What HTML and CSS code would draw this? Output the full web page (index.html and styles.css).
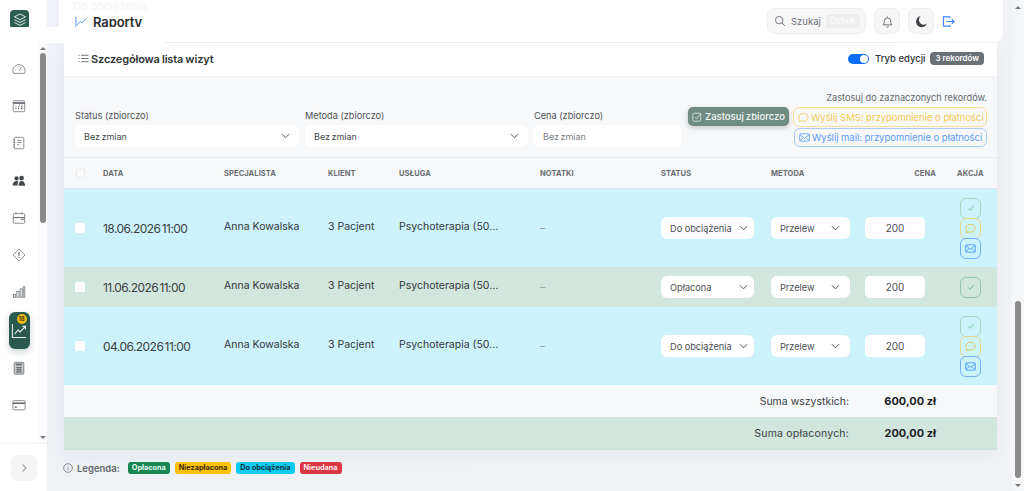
FILE: index.html
```html
<!DOCTYPE html>
<html lang="pl">
<head>
<meta charset="utf-8">
<title>Raporty</title>
<link rel="stylesheet" href="styles.css">
</head>
<body>
<div class="app">
  <aside class="sidebar">
    <div class="brand">
      <span class="brand-logo">
        <svg viewBox="0 0 20 20" width="16" height="16" fill="none" stroke="#dfe9e5" stroke-width="1.2" stroke-linejoin="round"><path d="M10 2.5 17 6l-7 3.5L3 6z"/><path d="M3 9.7l7 3.5 7-3.5"/><path d="M3 13.2l7 3.5 7-3.5"/></svg>
      </span>
    </div>
    <div class="side-body">
      <nav class="side-nav">
        <span class="nav-item"><svg viewBox="0 0 16 16" class="ico"><path d="M1.5 13h13l.5-3A7 7 0 0 0 1 10z"/><path d="M8 10l3-4"/><path d="M4 9h.6M5.5 6.3l.4.4M8 5v.6M12 9h-.6"/></svg></span>
        <span class="nav-item"><svg viewBox="0 0 16 16" class="ico"><rect x="1.5" y="2" width="13" height="12.5" rx="1"/><path d="M1.5 4.6h13" stroke-width="2"/><path d="M4 11h1M7 11h1M10 11h2M4 9h1M7 9h1M10 9h2M8 7h1M11 7h1" stroke-width="1.2"/></svg></span>
        <span class="nav-item"><svg viewBox="0 0 16 16" class="ico"><rect x="2.5" y="1.5" width="11" height="13" rx="1.4"/><path d="M1.5 4h2M1.5 7h2M1.5 10h2M1.5 13h2M6 5h5M6 7.5h5M6 10h2.5"/></svg></span>
        <span class="nav-item"><svg viewBox="0 0 16 16" class="ico-fill"><circle cx="5.2" cy="5" r="2.4"/><circle cx="11" cy="4.6" r="2.7"/><path d="M.8 13c0-3 1.8-5 4.4-5 1 0 1.7.3 2.2.7C6.6 10 6.3 11.5 6.3 13zM7.5 13.5c0-3.2 1.4-5.5 3.6-5.5s3.9 2.3 3.9 5.5z"/></svg></span>
        <span class="nav-item"><svg viewBox="0 0 16 16" class="ico"><rect x="1.5" y="3" width="13" height="11" rx="1.2"/><path d="M1.5 7.5h13M4.5 1.5V3M11.5 1.5V3M10 9.5h4.5" stroke-width="1.2"/></svg></span>
        <span class="nav-item"><svg viewBox="0 0 16 16" class="ico"><path d="M8 1.2 14.8 8 8 14.8 1.2 8z"/><path d="M8 4.8v4M8 10.4v1" stroke-width="1.4"/></svg></span>
        <span class="nav-item"><svg viewBox="0 0 16 16" class="ico"><rect x="1.5" y="10.5" width="2.5" height="3.5"/><rect x="5.5" y="7.5" width="2.5" height="6.5"/><rect x="9.3" y="4.5" width="2.3" height="9.5"/><rect x="12.8" y="2" width="1.8" height="12"/></svg></span>
        <span class="nav-item is-active">
          <svg viewBox="0 0 18 18" width="17" height="17" fill="none" stroke="#eef4f2" stroke-width="1.1"><path d="M1.5 2v14.5H16"/><path d="M4 12.5 7.5 8.5l2 2L15 5"/><path d="M12 4.5h3.3v3.3"/></svg>
          <span class="nav-badge">18</span>
        </span>
        <span class="nav-item"><svg viewBox="0 0 16 16" class="ico"><rect x="2.5" y="1.5" width="11" height="13.5" rx="1" fill="#c9cbcd"/><path d="M4.5 4h7" stroke-width="2"/><path d="M4.5 7.5h7M4.5 10h7M4.5 12.5h7M6.7 6.5v7M9.2 6.5v7" stroke-width="1"/></svg></span>
        <span class="nav-item"><svg viewBox="0 0 16 16" class="ico"><rect x="1" y="3" width="14" height="10.5" rx="1.2"/><path d="M1 6h14" stroke-width="1.8"/><path d="M3 10.5h2.5" stroke-width="1.5"/></svg></span>
      </nav>
      <div class="side-scroll">
        <span class="arrow-up"></span>
        <span class="side-thumb"></span>
        <span class="side-track"></span>
        <span class="arrow-down"></span>
      </div>
    </div>
    <div class="side-foot">
      <button class="collapse" type="button"><svg viewBox="0 0 10 10" width="10" height="10" fill="none" stroke="#9a9da1" stroke-width="1.1"><path d="M3.5 1.5 7 5 3.5 8.5"/></svg></button>
    </div>
  </aside>

  <main class="main">
    <header class="topbar">
      <span class="ghost">Do obciążenia</span>
      <div class="top-title">
        <svg viewBox="0 0 14 14" width="13" height="13" fill="none" stroke="#3b82f6" stroke-width=".9"><path d="M1 1v12h12"/><path d="M2.5 9.500 5.500 6l2 1.500L12 2.500"/></svg>
        <h1>Raporty</h1>
      </div>
      <div class="top-tools">
        <div class="search">
          <svg viewBox="0 0 14 14" width="12" height="12" fill="none" stroke="#6b7075" stroke-width="1.1"><circle cx="6" cy="6" r="4.3"/><path d="m9.2 9.2 3.6 3.6"/></svg>
          <span>Szukaj</span><kbd>Ctrl+K</kbd>
        </div>
        <button class="tool" type="button"><svg viewBox="0 0 14 14" width="13" height="13" fill="none" stroke="#565a5f" stroke-width=".9"><path d="M2.2 10.600c.9-1 1.300-2 1.300-4a3.500 3.500 0 0 1 7 0c0 2 .4 3 1.300 4z"/><path d="M5.800 12.300a1.300 1.300 0 0 0 2.400 0M7 1.500v1.500"/></svg></button>
        <button class="tool" type="button"><svg viewBox="0 0 14 14" width="13" height="13" fill="#3c4045"><path d="M6.100 1.200a6 6 0 1 0 6.700 8 5 5 0 0 1-6.700-8z"/></svg></button>
        <svg class="logout" viewBox="0 0 14 14" width="13" height="13" fill="none" stroke="#3b82f6" stroke-width="1.2"><path d="M8.500 3.500V2H1.500v10h7v-1.500"/><path d="M4.500 7H13M10.500 4.500 13 7l-2.500 2.500"/></svg>
      </div>
    </header>

    <section class="card">
      <div class="card-head">
        <h2><svg viewBox="0 0 12 12" width="11" height="11" fill="none" stroke="#55595e" stroke-width=".9"><path d="M3.500 2.500H11.500M3.500 6H11.500M3.500 9.500H11.500M.5 2.500h1.200M.5 6h1.200M.5 9.500h1.200"/></svg>Szczegółowa lista wizyt</h2>
        <div class="head-right">
          <span class="toggle"><span class="knob"></span></span>
          <span class="toggle-label">Tryb edycji</span>
          <span class="count">3 rekordów</span>
        </div>
      </div>

      <div class="bulk">
        <div class="bulk-field f-status"><label>Status (zbiorczo)</label><div class="control">Bez zmian<svg class="chev" viewBox="0 0 10 6"><path d="M1 1l4 4 4-4"/></svg></div></div>
        <div class="bulk-field f-method"><label>Metoda (zbiorczo)</label><div class="control">Bez zmian<svg class="chev" viewBox="0 0 10 6"><path d="M1 1l4 4 4-4"/></svg></div></div>
        <div class="bulk-field f-price"><label>Cena (zbiorczo)</label><div class="control muted">Bez zmian</div></div>
        <button class="apply" type="button"><svg viewBox="0 0 12 12" width="10" height="10" fill="none" stroke="#eaf0ee" stroke-width=".9"><rect x="1" y="1.500" width="9.500" height="9.500" rx="1.500"/><path d="M3.500 6l2 2 5-6"/></svg>Zastosuj zbiorczo</button>
        <div class="bulk-side">
          <p>Zastosuj do zaznaczonych rekordów.</p>
          <button class="outline amber" type="button"><svg viewBox="0 0 12 12" width="11" height="11" fill="none" stroke="currentColor" stroke-width=".9"><path d="M6 1.500c3 0 5 1.800 5 4.300s-2 4.200-5 4.200c-.8 0-1.500-.1-2.200-.4L1.500 10.500l.6-2A4 4 0 0 1 1 5.800C1 3.300 3 1.500 6 1.500z"/><path d="M3.800 5.800h.4M5.800 5.800h.4M7.800 5.800h.4"/></svg>Wyślij SMS: przypomnienie o płatności</button>
          <button class="outline blue" type="button"><svg viewBox="0 0 12 12" width="11" height="11" fill="none" stroke="currentColor" stroke-width=".9"><rect x=".8" y="2" width="10.400" height="8" rx="1.200"/><path d="m1 3 5 3.800L11 3M1 9.500l3.500-3.500M11 9.500 7.500 6"/></svg>Wyślij mail: przypomnienie o płatności</button>
        </div>
      </div>

      <div class="row thead">
        <span class="c-check"><span class="box small"></span></span>
        <span>DATA</span><span>SPECJALISTA</span><span>KLIENT</span><span>USŁUGA</span><span>NOTATKI</span><span>STATUS</span><span>METODA</span>
        <span class="c-price-h">CENA</span><span class="c-act-h">AKCJA</span>
      </div>

      <div class="row tall due">
        <span class="c-check"><span class="box"></span></span>
        <span class="c-date">18.06.2026 11:00</span><span class="up">Anna Kowalska</span><span class="up">3 Pacjent</span><span class="up">Psychoterapia (50…</span><span class="dash">–</span>
        <div class="pick p-status">Do obciążenia<svg class="chev" viewBox="0 0 10 6"><path d="M1 1l4 4 4-4"/></svg></div>
        <div class="pick p-method">Przelew<svg class="chev" viewBox="0 0 10 6"><path d="M1 1l4 4 4-4"/></svg></div>
        <div class="price">200</div>
        <div class="acts">
          <span class="act a-green"><svg viewBox="0 0 10 10" width="8" height="8" fill="none" stroke="currentColor" stroke-width="1"><path d="M1.500 5.500 4 8l4.500-6"/></svg></span>
          <span class="act a-amber"><svg viewBox="0 0 12 12" width="11" height="11" fill="none" stroke="currentColor" stroke-width=".9"><path d="M6 1.500c3 0 5 1.800 5 4.300s-2 4.200-5 4.200c-.8 0-1.500-.1-2.200-.4L1.500 10.500l.6-2A4 4 0 0 1 1 5.800C1 3.300 3 1.500 6 1.500z"/><path d="M3.800 5.800h.4M5.800 5.800h.4M7.800 5.800h.4"/></svg></span>
          <span class="act a-blue"><svg viewBox="0 0 12 12" width="11" height="11" fill="none" stroke="currentColor" stroke-width=".9"><rect x=".8" y="2" width="10.400" height="8" rx="1.200"/><path d="m1 3 5 3.800L11 3M1 9.500l3.500-3.500M11 9.500 7.500 6"/></svg></span>
        </div>
      </div>

      <div class="row short paid">
        <span class="c-check"><span class="box"></span></span>
        <span class="c-date">11.06.2026 11:00</span><span class="up">Anna Kowalska</span><span class="up">3 Pacjent</span><span class="up">Psychoterapia (50…</span><span class="dash">–</span>
        <div class="pick p-status">Opłacona<svg class="chev" viewBox="0 0 10 6"><path d="M1 1l4 4 4-4"/></svg></div>
        <div class="pick p-method">Przelew<svg class="chev" viewBox="0 0 10 6"><path d="M1 1l4 4 4-4"/></svg></div>
        <div class="price">200</div>
        <div class="acts">
          <span class="act a-green strong"><svg viewBox="0 0 10 10" width="8" height="8" fill="none" stroke="currentColor" stroke-width="1"><path d="M1.500 5.500 4 8l4.500-6"/></svg></span>
        </div>
      </div>

      <div class="row tall due">
        <span class="c-check"><span class="box"></span></span>
        <span class="c-date">04.06.2026 11:00</span><span class="up">Anna Kowalska</span><span class="up">3 Pacjent</span><span class="up">Psychoterapia (50…</span><span class="dash">–</span>
        <div class="pick p-status">Do obciążenia<svg class="chev" viewBox="0 0 10 6"><path d="M1 1l4 4 4-4"/></svg></div>
        <div class="pick p-method">Przelew<svg class="chev" viewBox="0 0 10 6"><path d="M1 1l4 4 4-4"/></svg></div>
        <div class="price">200</div>
        <div class="acts">
          <span class="act a-green"><svg viewBox="0 0 10 10" width="8" height="8" fill="none" stroke="currentColor" stroke-width="1"><path d="M1.500 5.500 4 8l4.500-6"/></svg></span>
          <span class="act a-amber"><svg viewBox="0 0 12 12" width="11" height="11" fill="none" stroke="currentColor" stroke-width=".9"><path d="M6 1.500c3 0 5 1.800 5 4.300s-2 4.200-5 4.200c-.8 0-1.500-.1-2.200-.4L1.500 10.500l.6-2A4 4 0 0 1 1 5.800C1 3.300 3 1.500 6 1.500z"/><path d="M3.800 5.800h.4M5.800 5.800h.4M7.800 5.800h.4"/></svg></span>
          <span class="act a-blue"><svg viewBox="0 0 12 12" width="11" height="11" fill="none" stroke="currentColor" stroke-width=".9"><rect x=".8" y="2" width="10.400" height="8" rx="1.200"/><path d="m1 3 5 3.800L11 3M1 9.500l3.500-3.500M11 9.500 7.500 6"/></svg></span>
        </div>
      </div>

      <div class="sum sum-all"><span>Suma wszystkich:</span><b>600,00 zł</b></div>
      <div class="sum sum-paid"><span class="paid-label">Suma opłaconych:</span><b>200,00 zł</b></div>
    </section>

    <footer class="legend">
      <svg viewBox="0 0 12 12" width="10" height="10" fill="none" stroke="#6b7075" stroke-width=".9"><circle cx="6" cy="6" r="5.200"/><path d="M6 5.200v3.500M6 3.300v.9"/></svg>
      <span class="legend-label">Legenda:</span>
      <span class="tag t-green">Opłacona</span>
      <span class="tag t-amber">Niezapłacona</span>
      <span class="tag t-cyan">Do obciążenia</span>
      <span class="tag t-red">Nieudana</span>
    </footer>
  </main>

  <div class="page-scroll">
    <span class="arrow-up"></span>
    <span class="page-track"></span>
    <span class="page-thumb"></span>
    <span class="arrow-down"></span>
  </div>
  <div class="top-veil"></div>
</div>
</body>
</html>
```

FILE: styles.css
```css
* { box-sizing: border-box; }
html, body { margin: 0; height: 100%; overflow: hidden; }
body {
  font-family: Inter, "Noto Sans", "Liberation Sans", sans-serif;
  color: #2b2f33;
  font-size: 11px;
  background: #eef0f4;
}
h1, h2, p { margin: 0; }
button { font: inherit; cursor: default; }
svg { display: block; flex: none; }

.app { display: flex; width: 1024px; height: 491px; overflow: hidden; position: relative; }
.top-veil { position: absolute; left: 0; top: 27px; width: 165px; height: 16px; background: #fff; }

/* sidebar */
.sidebar {
  width: 47px; flex: none; background: #fff;
  display: flex; flex-direction: column;
}
.brand { height: 41px; flex: none; padding: 10px 0 0 10px; overflow: hidden; }
.brand-logo {
  width: 19px; height: 19px; border-radius: 4px; background: #2e5e52;
  display: flex; align-items: center; justify-content: center;
}
.side-body { flex: 1; display: flex; min-height: 0; background: #fbfbfd; }
.side-nav { width: 38px; display: flex; flex-direction: column; align-items: center; padding-top: 9px; background: #fff; }
.nav-item { width: 38px; height: 37.3px; flex: none; display: flex; align-items: center; justify-content: center; position: relative; }
.nav-item.is-active {
  width: 21px; height: 37px; margin-top: 1px; border-radius: 6px; background: #2a5a4f;
  box-shadow: 0 3px 7px rgba(42,90,79,.25);
}
.ico { width: 14px; height: 14px; fill: none; stroke: #65696e; stroke-width: .85; }
.ico-fill { width: 14px; height: 14px; fill: #44484d; }
.nav-badge {
  position: absolute; top: 2px; right: 3px; width: 10px; height: 10px; border-radius: 50%;
  background: #f2b90f; color: #3b3210; font-size: 5.5px; font-weight: 700; line-height: 10px; text-align: center;
}
.side-scroll { width: 9px; display: flex; flex-direction: column; align-items: center; }
.side-thumb { width: 6px; height: 170px; margin-top: 3px; background: #8a8a8a; border-radius: 3px; flex: none; }
.side-track { flex: 1; }
.arrow-up, .arrow-down { width: 0; height: 0; border-left: 3px solid transparent; border-right: 3px solid transparent; flex: none; }
.arrow-up { border-bottom: 3px solid #777; margin-top: 6px; }
.arrow-down { border-top: 3px solid #777; margin-bottom: 4px; }
.side-foot { height: 48px; flex: none; border-top: 1px solid #f1f2f4; padding: 11px 0 0 11px; background: #fff; }
.collapse {
  width: 26px; height: 26px; border: 0; border-radius: 6px; background: #f5f5f6; padding: 0;
  display: flex; align-items: center; justify-content: center;
}

/* main */
.main { width: 965px; flex: none; padding: 0 9px 0 12px; background: linear-gradient(100deg, #eef1f5, #f1f2f5); display: flex; flex-direction: column; }
.topbar {
  height: 42px; flex: none; background: #fff; border-radius: 0 0 9px 9px;
  display: flex; align-items: center; justify-content: space-between;
  padding: 0 8px 0 16px; position: relative;
}
.ghost { position: absolute; left: 14px; top: 0; font-size: 11px; line-height: 13px; color: #f3f5f6; white-space: nowrap; }
.top-title { display: flex; align-items: center; gap: 5px; align-self: flex-start; padding-top: 14px; position: relative; }
.top-title h1 { font-size: 13px; font-weight: 600; letter-spacing: -.1px; color: #2a2d31; line-height: 16px; }
.top-tools { display: flex; align-items: center; }
.search {
  width: 99px; height: 26px; border: 1px solid #efeff1; border-radius: 7px; background: #f7f7f8;
  display: flex; align-items: center; padding-left: 6px; gap: 5px; color: #6f7378; font-size: 9.5px;
}
.search kbd { font: inherit; font-size: 8.5px; background: #eeeef0; color: #fff; border-radius: 3px; padding: 2px 4px; }
.tool {
  width: 26px; height: 26px; border: 1px solid #ededef; border-radius: 7px; background: #f6f6f7; padding: 0;
  display: flex; align-items: center; justify-content: center; margin-left: 8px;
}
.logout { margin-left: 8px; margin-right: 40px; }

/* card */
.card {
  margin: 1px 6px 0 5px; background: #fff; border-radius: 0 0 2px 2px;
  box-shadow: 0 6px 18px rgba(40,50,70,.05); flex: none;
}
.card-head { height: 34px; display: flex; justify-content: space-between; align-items: center; padding: 0 13px 2px 14px; border-bottom: 1px solid #f2f3f5; }
.card-head h2 { font-size: 11px; font-weight: 600; color: #32363a; display: flex; align-items: center; gap: 2px; letter-spacing: -.15px; word-spacing: -.5px; }
.head-right { display: flex; align-items: center; }
.toggle { width: 21px; height: 10px; border-radius: 5px; background: #0d6efd; position: relative; display: block; }
.knob { position: absolute; right: 1px; top: 1px; width: 8px; height: 8px; border-radius: 50%; background: #fff; }
.toggle-label { margin-left: 6px; font-size: 9.5px; font-weight: 500; color: #2f3337; }
.count { margin-left: 5px; height: 13px; line-height: 13px; padding: 0 5px; border-radius: 4px; background: #6b7075; color: #fff; font-size: 8px; font-weight: 600; }

.bulk { height: 81px; background: #f7f8fa; border-bottom: 1px solid #e9ebee; padding: 0 10px 0 11px; display: flex; align-items: flex-end; }
.bulk-field { padding-bottom: 10px; }
.f-status { width: 230px; }
.f-method { width: 229px; }
.f-price { width: 154px; }
.bulk-field label { display: block; font-size: 9.2px; color: #4f5358; margin-bottom: 3px; line-height: 13px; }
.control {
  height: 22px; background: #fff; border-radius: 6px; margin-right: 6px; padding: 0 9px;
  display: flex; align-items: center; justify-content: space-between; font-size: 9px; color: #45494e; word-spacing: -1px;
}
.f-price .control { margin-right: 7px; }
.control.muted { color: #7a7e83; }
.chev { width: 9px; height: 6px; fill: none; stroke: #4d5156; stroke-width: 1.1; flex: none; }
.apply {
  align-self: flex-start; margin: 30px 0 0 0; height: 19px; width: 101px; border: 0; border-radius: 5px; background: #6f8c82; color: #f2f5f4;
  font-size: 9.5px; font-weight: 500; display: flex; align-items: center; justify-content: center; gap: 3px; padding: 0;
  box-shadow: 0 2px 5px rgba(50,70,60,.25); white-space: nowrap; word-spacing: -.5px;
}
.bulk-side { margin-left: 4px; align-self: flex-start; padding-top: 14px; display: flex; flex-direction: column; align-items: flex-end; }
.bulk-side p { font-size: 9.2px; color: #64686d; line-height: 13px; margin-bottom: 3px; white-space: nowrap; }
.outline {
  height: 20px; background: transparent; border: 1px solid; border-radius: 6px; padding: 0 4px;
  display: flex; align-items: center; gap: 2px; font-size: 9.5px; white-space: nowrap; letter-spacing: -.03px;
}
.amber { color: #f5c94f; border-color: #fadf99; width: 194px; margin-bottom: 1px; }
.blue { color: #5b9bf5; border-color: #a9cbfa; width: 193px; height: 19px; }

/* table */
.row {
  display: grid;
  grid-template-columns: 39px 121px 104px 71px 141px 121px 110px 94px 92px 40px;
  align-items: center;
  font-size: 10.5px; color: #33373b;
}
.row.thead { height: 31px; background: #f7f8fa; border-bottom: 1px solid #d9e5ea; font-size: 7.5px; font-weight: 700; color: #6a6e73; letter-spacing: .1px; }
.c-price-h { text-align: right; padding-right: 21px; }
.c-act-h { white-space: nowrap; }
.c-check { display: flex; justify-content: center; padding-right: 7px; }
.box { width: 10px; height: 10px; background: #fff; border-radius: 2px; display: block; }
.box.small { width: 9px; height: 9px; border: 1px solid #e9eaec; background: #fbfbfc; }
.tall { height: 78px; }
.short { height: 40px; }
.due { background: #ccf3fc; }
.paid { background: #d1e6dd; }
.c-date { font-size: 12px; color: #3b3f43; letter-spacing: -.55px; word-spacing: -1.5px; white-space: nowrap; }
.up { position: relative; top: -2px; white-space: nowrap; }
.dash { color: #9aa0a4; }
.pick {
  height: 22px; background: #fff; border-radius: 6px; display: flex; align-items: center; justify-content: space-between;
  padding: 0 6px 0 9px; font-size: 9.2px; color: #4a4e53; white-space: nowrap;
}
.p-status { width: 93px; }
.p-method { width: 79px; padding-right: 10px; }
.price { width: 60px; height: 22px; background: #fff; border-radius: 5px; text-align: center; line-height: 22px; font-size: 10px; color: #4a4e53; }
.acts { display: flex; flex-direction: column; align-items: center; width: 21px; margin-left: 3px; }
.act { width: 21px; height: 21px; border: 1px solid; border-radius: 6px; display: flex; align-items: center; justify-content: center; flex: none; margin-bottom: -1px; }
.act:last-child { margin-bottom: 0; }
.a-green { color: #63bd95; border-color: #a5d8c4; }
.a-green.strong { border-color: #93c9ab; color: #5fb487; }
.a-amber { color: #e6bd3c; border-color: #e6d98a; }
.a-blue { color: #3f8ff5; border-color: #73aef7; }

.sum { display: flex; align-items: center; font-size: 10.5px; justify-content: flex-end; color: #3a3e42; }
.sum b { width: 87px; text-align: right; font-size: 11px; font-weight: 700; color: #202327; margin-right: 61px; }
.paid-label { letter-spacing: .2px; }
.sum-all { height: 32px; background: #f7f8fa; }
.sum-paid { height: 33px; background: #d1e6dd; border-bottom: 1px solid #cddfd6; }

.legend { display: flex; align-items: center; padding: 12px 0 0 4px; }
.legend-label { margin: 0 8px 0 4px; font-size: 9.5px; font-weight: 600; color: #62666b; }
.tag { height: 12px; line-height: 12px; border-radius: 3px; padding: 0 4px; font-size: 7.3px; font-weight: 700; margin-right: 5px; white-space: nowrap; }
.t-green { background: #198754; color: #e8f5ee; }
.t-amber { background: #ffc107; color: #3a2e06; }
.t-cyan { background: #0dcaf0; color: #06333d; }
.t-red { background: #dc3545; color: #fdecee; }

.page-scroll { flex: 1; background: #f5f6f8; display: flex; flex-direction: column; align-items: center; }
.page-track { flex: 1; }
.page-thumb { width: 6px; height: 177px; background: #8a8a8a; border-radius: 3px; flex: none; margin-bottom: 6px; }
```
